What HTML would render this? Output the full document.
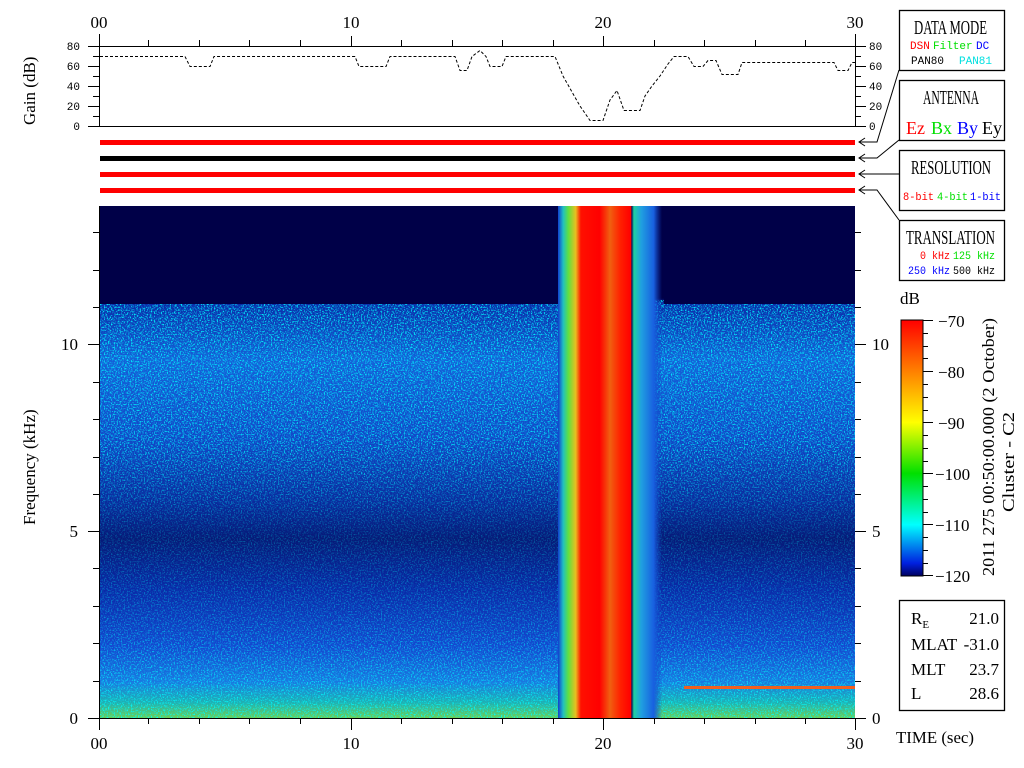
<!DOCTYPE html>
<html><head><style>
body{margin:0;background:#fff;width:1024px;height:768px;overflow:hidden}
svg{display:block}
.s{font-family:"Liberation Serif",serif;font-size:17px}
.m{font-family:"Liberation Mono",monospace;font-size:11px}
</style></head><body>
<svg width="1024" height="768" viewBox="0 0 1024 768" xmlns="http://www.w3.org/2000/svg">
<defs>
<linearGradient id="bg" x1="0" y1="206" x2="0" y2="718" gradientUnits="userSpaceOnUse">
<stop offset="0" stop-color="#000048"/>
<stop offset="0.18" stop-color="#000048"/>
<stop offset="0.19" stop-color="#0a2aa8"/>
<stop offset="0.3" stop-color="#1560d8"/>
<stop offset="0.45" stop-color="#1248c8"/>
<stop offset="0.58" stop-color="#0a2a9c"/>
<stop offset="0.65" stop-color="#061a78"/>
<stop offset="0.75" stop-color="#0a2aa8"/>
<stop offset="0.86" stop-color="#1448d0"/>
<stop offset="0.93" stop-color="#1a78e0"/>
<stop offset="0.97" stop-color="#20b0b0"/>
<stop offset="1" stop-color="#70d050"/>
</linearGradient>
<linearGradient id="band" x1="558" y1="0" x2="662" y2="0" gradientUnits="userSpaceOnUse">
<stop offset="0" stop-color="#1040d0"/>
<stop offset="0.05" stop-color="#20c0c0"/>
<stop offset="0.1" stop-color="#60e040"/>
<stop offset="0.17" stop-color="#e8c020"/>
<stop offset="0.22" stop-color="#ff1000"/>
<stop offset="0.4" stop-color="#ff0000"/>
<stop offset="0.5" stop-color="#f06010"/>
<stop offset="0.6" stop-color="#ff2000"/>
<stop offset="0.7" stop-color="#ff0000"/>
<stop offset="0.71" stop-color="#002060"/>
<stop offset="0.73" stop-color="#20d0a0"/>
<stop offset="0.8" stop-color="#20a0e0"/>
<stop offset="0.92" stop-color="#1860e0"/>
<stop offset="1" stop-color="#1040c0" stop-opacity="0"/>
</linearGradient>
<linearGradient id="cb" x1="0" y1="320" x2="0" y2="576" gradientUnits="userSpaceOnUse">
<stop offset="0" stop-color="#ff0000"/>
<stop offset="0.25" stop-color="#ffa000"/>
<stop offset="0.4" stop-color="#ffff00"/>
<stop offset="0.6" stop-color="#00e000"/>
<stop offset="0.8" stop-color="#00ffff"/>
<stop offset="0.95" stop-color="#0020e0"/>
<stop offset="1" stop-color="#000060"/>
</linearGradient>
<linearGradient id="fade" x1="0" y1="300" x2="0" y2="718" gradientUnits="userSpaceOnUse">
<stop offset="0" stop-color="#fff" stop-opacity="0.9"/>
<stop offset="0.35" stop-color="#fff" stop-opacity="0.8"/>
<stop offset="0.55" stop-color="#fff" stop-opacity="0.25"/>
<stop offset="0.75" stop-color="#fff" stop-opacity="0.4"/>
<stop offset="1" stop-color="#fff" stop-opacity="0.9"/>
</linearGradient>
<mask id="mk"><rect x="100" y="300" width="755" height="418" fill="url(#fade)"/></mask>
<filter id="nz" x="0" y="0" width="100%" height="100%">
<feTurbulence type="fractalNoise" baseFrequency="0.7" numOctaves="2" seed="3"/>
<feColorMatrix values="0 0 0 0 0  3 0 0 0 -0.9  0 0 0 0 1  4 0 0 0 -1.9"/>
</filter>
</defs>
<g stroke="#000" stroke-width="1" fill="none">
<line x1="88" y1="46.5" x2="866" y2="46.5"/>
<line x1="88" y1="126.5" x2="866" y2="126.5"/>
<line x1="99.5" y1="34" x2="99.5" y2="127"/>
<line x1="855.5" y1="34" x2="855.5" y2="127"/>
<path d="M88 66.5h11M88 86.5h11M88 106.5h11M93 56.5h6M93 76.5h6M93 96.5h6M93 116.5h6M855 66.5h11M855 86.5h11M855 106.5h11M855 56.5h6M855 76.5h6M855 96.5h6M855 116.5h6"/>
<path d="M148.5 40v6M199.5 40v6M249.5 40v6M300.5 40v6M351.5 36v10M401.5 40v6M452.5 40v6M502.5 40v6M553.5 40v6M603.5 36v10M654.5 40v6M704.5 40v6M755.5 40v6M805.5 40v6"/>
<polyline stroke-dasharray="3 2" points="100,56.5 185,56.5 190,66.5 210,66.5 214,56.5 355,56.5 359,66.5 386,66.5 390,56.5 455,56.5 460,70.5 467,70.5 472,56.5 480,50.5 486,56.5 490,66.5 502,66.5 506,56.5 555,56.5 563,76 572,92 580,106 590,120.5 603,120.5 610,100 617,90.5 624,110.5 640,110.5 645,96 652,86 660,76 668,64 674,56.5 688,56.5 694,66.5 703,66.5 708,60.5 716,60.5 722,74.5 738,74.5 742,62.5 834,62.5 838,70.5 848,70.5 852,62.5 855,62.5"/>
</g>
<g class="m" fill="#000" text-anchor="end">
<text x="80" y="50">80</text><text x="80" y="70">60</text><text x="80" y="90">40</text><text x="80" y="110">20</text><text x="80" y="130">0</text>
</g>
<g class="m" fill="#000">
<text x="869" y="50">80</text><text x="869" y="70">60</text><text x="869" y="90">40</text><text x="869" y="110">20</text><text x="869" y="130">0</text>
</g>
<text class="s" transform="translate(35,125) rotate(-90)" fill="#000">Gain (dB)</text>
<g class="s" fill="#000" text-anchor="middle">
<text x="99" y="28">00</text><text x="351" y="28">10</text><text x="603" y="28">20</text><text x="855" y="28">30</text>
</g>
<rect x="100" y="140" width="755" height="5" fill="#ff0000"/>
<rect x="100" y="156" width="755" height="5" fill="#000"/>
<rect x="100" y="172" width="755" height="5" fill="#ff0000"/>
<rect x="100" y="188" width="755" height="5" fill="#ff0000"/>
<g stroke="#000" fill="none">
<path d="M899 70 L877 142 L859 142 M865 138 L859 142 L865 146"/>
<path d="M899 140 L877 158 L859 158 M865 154 L859 158 L865 162"/>
<path d="M899 174 L859 174 M865 170 L859 174 L865 178"/>
<path d="M899 220 L877 190 L859 190 M865 186 L859 190 L865 194"/>
</g>
<rect x="100" y="206" width="755" height="512" fill="url(#bg)"/>
<g mask="url(#mk)"><rect x="100" y="300" width="755" height="418" filter="url(#nz)"/></g>
<rect x="100" y="206" width="458" height="98" fill="#000048"/>
<rect x="664" y="206" width="191" height="98" fill="#000048"/>
<rect x="558" y="206" width="104" height="512" fill="url(#band)"/>
<rect x="684" y="686" width="171" height="3" fill="#f06020"/>
<line x1="99.5" y1="206" x2="99.5" y2="718" stroke="#000"/>
<g stroke="#000" fill="none">
<line x1="88" y1="718.5" x2="866" y2="718.5"/>
<line x1="99.5" y1="718" x2="99.5" y2="730"/>
<line x1="855.5" y1="718" x2="855.5" y2="730"/>
<path d="M351.5 718v12M603.5 718v12M148.5 718v6M199.5 718v6M249.5 718v6M300.5 718v6M401.5 718v6M452.5 718v6M502.5 718v6M553.5 718v6M654.5 718v6M704.5 718v6M755.5 718v6M805.5 718v6"/>
<path d="M88 531.5h11M88 344.5h11M93 681.5h6M93 643.5h6M93 606.5h6M93 568.5h6M93 494.5h6M93 457.5h6M93 419.5h6M93 382.5h6M93 307.5h6M93 270.5h6M93 232.5h6"/>
<path d="M855 531.5h11M855 344.5h11M855 681.5h6M855 643.5h6M855 606.5h6M855 568.5h6M855 494.5h6M855 457.5h6M855 419.5h6M855 382.5h6M855 307.5h6M855 270.5h6M855 232.5h6"/>
</g>
<g class="s" fill="#000" text-anchor="middle">
<text x="99" y="749">00</text><text x="351" y="749">10</text><text x="603" y="749">20</text><text x="855" y="749">30</text>
</g>
<g class="s" fill="#000" text-anchor="end">
<text x="78" y="724">0</text><text x="78" y="537">5</text><text x="78" y="350">10</text>
</g>
<g class="s" fill="#000">
<text x="872" y="724">0</text><text x="872" y="537">5</text><text x="872" y="350">10</text>
</g>
<text class="s" transform="translate(35,525) rotate(-90)" fill="#000">Frequency (kHz)</text>
<text class="s" x="896" y="743" fill="#000" textLength="78" lengthAdjust="spacingAndGlyphs">TIME (sec)</text>
<g fill="none" stroke="#000" stroke-width="1.3">
<rect x="899.5" y="10.5" width="105" height="60"/>
<rect x="899.5" y="80.5" width="105" height="60"/>
<rect x="899.5" y="150.5" width="105" height="60"/>
<rect x="899.5" y="220.5" width="105" height="60"/>
<rect x="899.5" y="600.5" width="105" height="110"/>
</g>
<g class="s" fill="#000" style="font-size:20px">
<text x="914" y="34" textLength="73" lengthAdjust="spacingAndGlyphs">DATA MODE</text>
<text x="923" y="104" textLength="56" lengthAdjust="spacingAndGlyphs">ANTENNA</text>
<text x="911" y="174" textLength="80" lengthAdjust="spacingAndGlyphs">RESOLUTION</text>
<text x="906" y="244" textLength="89" lengthAdjust="spacingAndGlyphs">TRANSLATION</text>
</g>
<g class="m">
<text x="910" y="49" fill="#ff0000">DSN</text><text x="933" y="49" fill="#00e000">Filter</text><text x="976" y="49" fill="#0000ff">DC</text>
<text x="911" y="64" fill="#000">PAN80</text><text x="959" y="64" fill="#00e0e0">PAN81</text>
<text x="903" y="200" fill="#ff0000" textLength="31" lengthAdjust="spacingAndGlyphs">8-bit</text><text x="937" y="200" fill="#00e000" textLength="31" lengthAdjust="spacingAndGlyphs">4-bit</text><text x="970" y="200" fill="#0000ff" textLength="31" lengthAdjust="spacingAndGlyphs">1-bit</text>
<text x="920" y="259" fill="#ff0000" textLength="30" lengthAdjust="spacingAndGlyphs">0 kHz</text><text x="953" y="259" fill="#00e000" textLength="42" lengthAdjust="spacingAndGlyphs">125 kHz</text>
<text x="908" y="274" fill="#0000ff" textLength="42" lengthAdjust="spacingAndGlyphs">250 kHz</text><text x="953" y="274" fill="#000" textLength="42" lengthAdjust="spacingAndGlyphs">500 kHz</text>
</g>
<g class="s" style="font-size:18px">
<text x="906" y="134" fill="#ff0000">Ez</text><text x="931" y="134" fill="#00e000">Bx</text><text x="957" y="134" fill="#0000ff">By</text><text x="982" y="134" fill="#000">Ey</text>
</g>
<text class="s" x="900" y="304" fill="#000">dB</text>
<rect x="901" y="320" width="22" height="256" fill="url(#cb)" stroke="#000"/>
<g stroke="#000"><path d="M923 320.5h10M923 371.5h10M923 422.5h10M923 473.5h10M923 524.5h10M923 575.5h10M923 333.5h5M923 346.5h5M923 358.5h5M923 384.5h5M923 397.5h5M923 410.5h5M923 435.5h5M923 448.5h5M923 461.5h5M923 486.5h5M923 499.5h5M923 512.5h5M923 537.5h5M923 550.5h5M923 563.5h5"/></g>
<g class="s" fill="#000">
<text x="938" y="327">−70</text><text x="938" y="378">−80</text><text x="938" y="429">−90</text><text x="935" y="480">−100</text><text x="935" y="531">−110</text><text x="935" y="582">−120</text>
</g>
<text class="s" transform="translate(994,576) rotate(-90)" fill="#000" textLength="258" lengthAdjust="spacingAndGlyphs">2011 275 00:50:00.000 (2 October)</text>
<text class="s" transform="translate(1014,512) rotate(-90)" fill="#000" textLength="100" lengthAdjust="spacingAndGlyphs">Cluster - C2</text>
<g class="s" fill="#000">
<text x="911" y="624">R<tspan font-size="11" dy="4">E</tspan></text>
<text x="911" y="650">MLAT</text><text x="911" y="675">MLT</text><text x="911" y="699">L</text>
</g>
<g class="s" fill="#000" text-anchor="end">
<text x="999" y="624">21.0</text><text x="999" y="650">-31.0</text><text x="999" y="675">23.7</text><text x="999" y="699">28.6</text>
</g>
</svg>
</body></html>
